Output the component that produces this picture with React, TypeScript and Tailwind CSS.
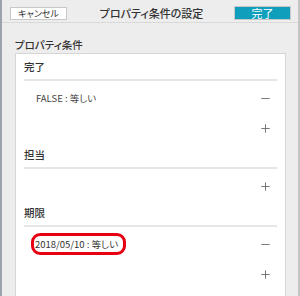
import { Minus, Plus } from 'lucide-react';

const font = { fontFamily: '"Noto Sans CJK JP", "Noto Sans", sans-serif' };

function SectionHeader({ title, first }: { title: string; first?: boolean }) {
  return (
    <div className={first ? 'pt-[1px]' : ''}>
      <div className="h-[24px] flex items-center text-[10.5px] font-medium text-[#333]">{title}</div>
      <div className="h-[2px] bg-[#e6e6e6]" />
      <div className="h-[2px]" />
    </div>
  );
}

function ItemRow({ label, highlight }: { label: string; highlight?: boolean }) {
  return (
    <div className="h-[30px] flex items-center justify-between pl-[12px] pr-[5px]">
      {highlight ? (
        <span className="-ml-[5px] rounded-[9px] border-[3px] border-[#e60012] pl-[1px] pr-[5px] h-[22px] flex items-center text-[9.5px] text-[#333]">
          {label}
        </span>
      ) : (
        <span className="text-[9.5px] text-[#444]">{label}</span>
      )}
      <Minus className="w-[13px] h-[13px] text-[#666]" strokeWidth={1.6} />
    </div>
  );
}

function AddRow() {
  return (
    <div className="h-[30px] flex items-center justify-end pr-[5px]">
      <Plus className="w-[13px] h-[13px] text-[#666]" strokeWidth={1.6} />
    </div>
  );
}

export default function App() {
  return (
    <div
      className="w-[300px] h-[296px] overflow-hidden bg-[#ededed] border-l-2 border-l-[#9aa3ab] border-r-2 border-r-[#c4c4c4] [font-feature-settings:'palt']"
      style={font}
    >
      {/* header bar */}
      <div className="h-[23px] flex items-center justify-between pl-[8px] pr-[7px] pt-[4px] border-b border-[#d9d9d9]">
        <button className="w-[57px] h-[13px] bg-white border border-[#c8c8c8] text-[9px] leading-none text-[#333] flex items-center justify-center">
          キャンセル
        </button>
        <div className="text-[11px] font-medium text-[#333] ml-[2px]">プロパティ条件の設定</div>
        <button className="w-[57px] h-[14px] bg-[#0f9fbd] border border-[#c8c8c8] text-[11px] leading-none text-white flex items-center justify-center">
          完了
        </button>
      </div>

      <div className="pl-[13px] pr-[12px] pt-[14px]">
        <div className="text-[10.5px] font-medium text-[#333] h-[16px] flex items-center">プロパティ条件</div>
        <div className="bg-white border border-[#d6d6d6] px-[8px]">
          <SectionHeader title="完了" first />
          <ItemRow label="FALSE : 等しい" />
          <AddRow />
          <SectionHeader title="担当" />
          <AddRow />
          <SectionHeader title="期限" />
          <ItemRow label="2018/05/10 : 等しい" highlight />
          <AddRow />
          <SectionHeader title="ステータス" />
        </div>
      </div>
    </div>
  );
}
